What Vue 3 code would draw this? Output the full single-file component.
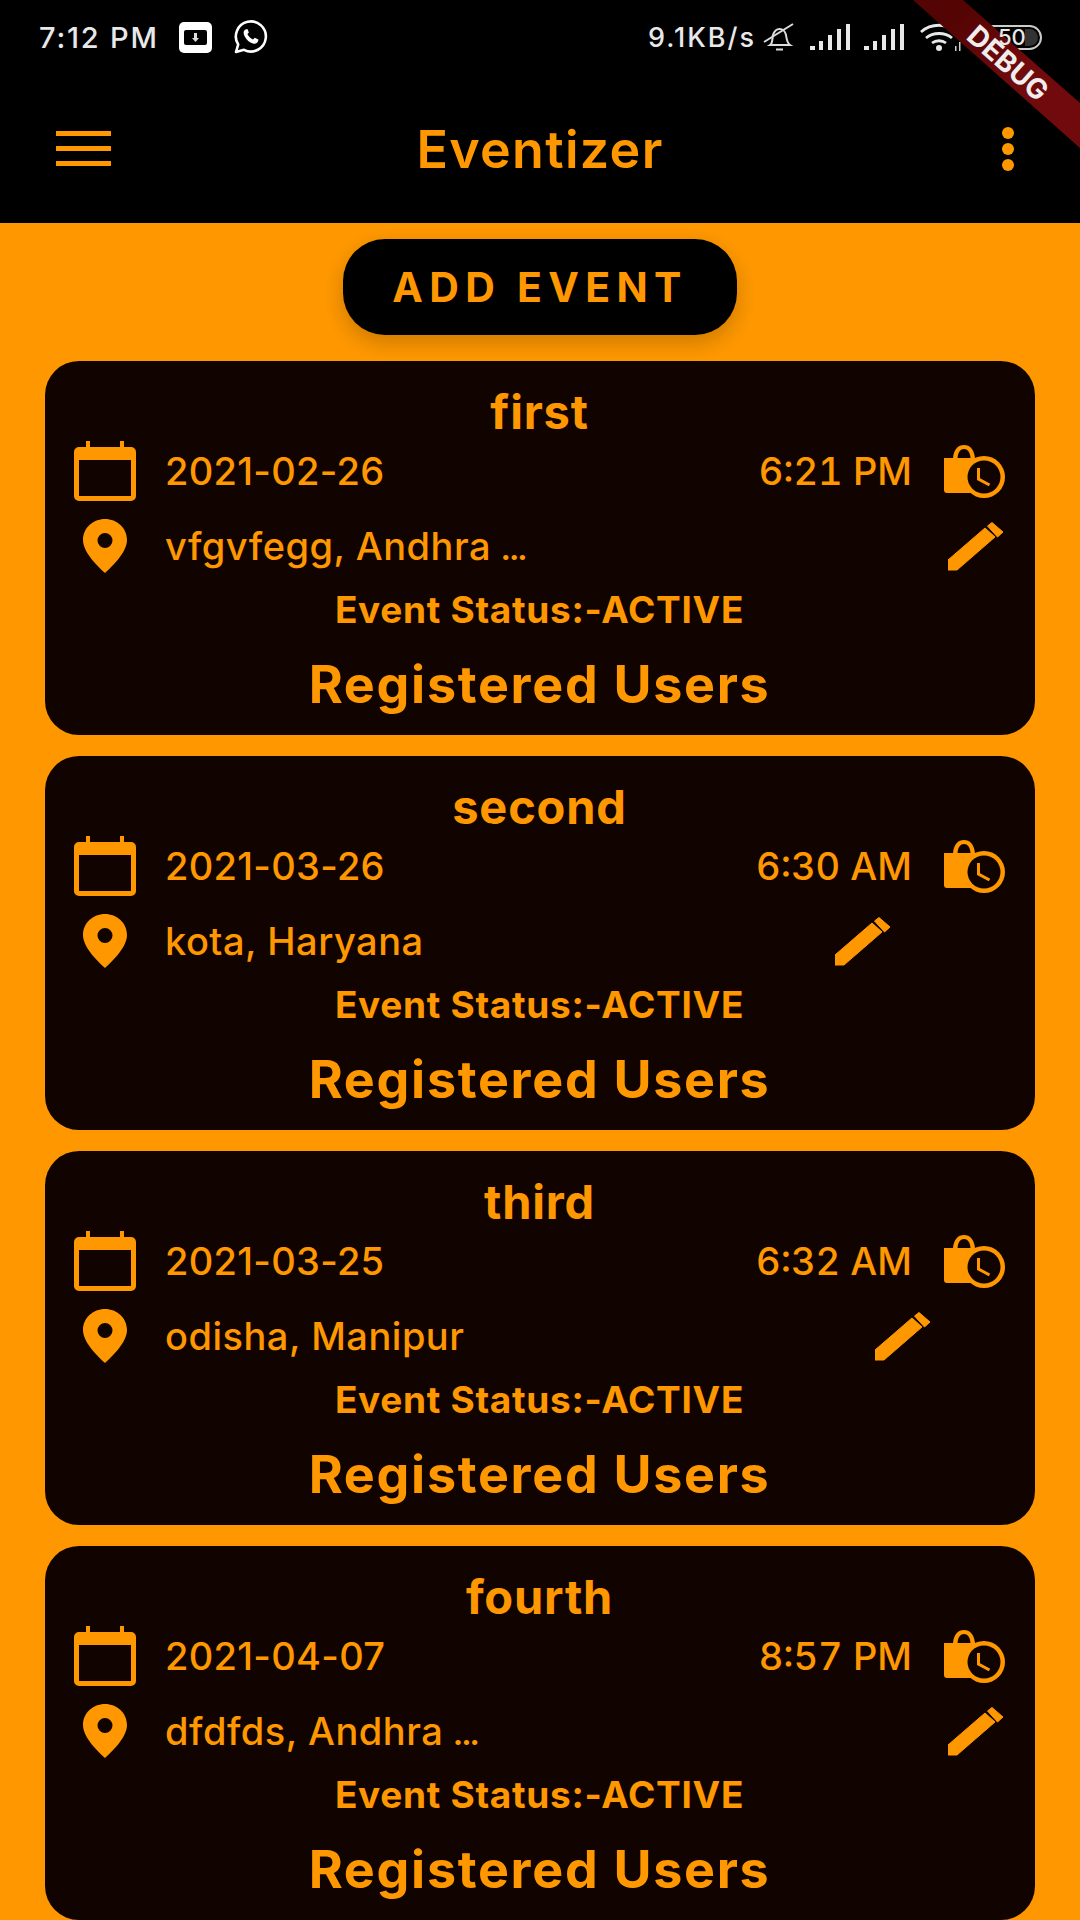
<script setup>
const events = [
  { title: 'first', date: '2021-02-26', time: '6:21 PM', place: 'vfgvfegg, Andhra', long: true },
  { title: 'second', date: '2021-03-26', time: '6:30 AM', place: 'kota, Haryana', long: false },
  { title: 'third', date: '2021-03-25', time: '6:32 AM', place: 'odisha, Manipur', long: false },
  { title: 'fourth', date: '2021-04-07', time: '8:57 PM', place: 'dfdfds, Andhra', long: true }
]
</script>

<template>
  <div class="screen">
    <header class="top">
      <div class="status">
        <span class="clock">7:12 PM</span>
        <svg class="st-box" viewBox="0 0 33 31">
          <rect width="33" height="31" rx="5" fill="#fff" />
          <rect x="5" y="8" width="23" height="15" rx="2" fill="#000" />
          <path d="M15 11h3v5h2l-3.500 4-3.500-4h2z" fill="#ddd" />
        </svg>
        <svg class="st-wa" viewBox="0 0 36 34">
          <path d="M3 32l2.200-7.500A15 15 0 1 1 11 29.800z" fill="none" stroke="#fff" stroke-width="2.600" stroke-linejoin="round" />
          <path d="M12.500 9.500c-2 1-2.500 3.500-1 6.500 2 4 5 6.500 8.500 7.500 2.500.7 4.500-.5 5.200-2.500l.2-1.500-3.700-1.800-1.700 1.900c-2.500-1-4.500-3-5.600-5.500l1.500-1.700-1.500-3.500z" fill="#fff" />
        </svg>
        <span class="speed">9.1KB/s</span>
        <svg class="st-bell" viewBox="0 0 33 28">
          <path d="M7 22c3-2 2-6 3-10 1-3 3-6 6.500-6s6 3 6.500 6c.5 4 1 8 4 10zM13 26.500h7" fill="none" stroke="#ddd" stroke-width="2" />
          <path d="M1 19L30 1" stroke="#ddd" stroke-width="2" />
        </svg>
        <svg class="st-signal" viewBox="0 0 40 26">
          <path d="M0 22h5v4H0zM9 17h4v9H9zM18 11h4v15h-4zM27 5h4v21h-4zM36 0h4v26h-4z" fill="#e8e8e8" />
        </svg>
        <svg class="st-signal" viewBox="0 0 40 26">
          <path d="M0 22h5v4H0zM9 17h4v9H9zM18 11h4v15h-4zM27 5h4v21h-4zM36 0h4v26h-4z" fill="#e8e8e8" />
        </svg>
        <svg class="st-wifi" viewBox="0 0 42 28">
          <path d="M1 9c10-9 26-9 36 0M6 15c7-6 19-6 26 0M12 20c4-3 10-3 14 0" fill="none" stroke="#e8e8e8" stroke-width="2.800" />
          <circle cx="19" cy="25" r="3" fill="#e8e8e8" />
          <path d="M35 23h1.500v5H35zM39 19h1.500v9H39z" fill="#ccc" />
        </svg>
        <div class="battery"><span>50</span><i></i></div>
      </div>
      <div class="toolbar">
        <div class="burger"><i></i><i></i><i></i></div>
        <h1>Eventizer</h1>
        <div class="dots"><i></i><i></i><i></i></div>
      </div>
    </header>

    <main class="content">
      <button class="add">ADD EVENT</button>

      <section v-for="ev in events" :key="ev.title" class="card">
        <div class="title">{{ ev.title }}</div>

        <div class="row">
          <svg class="ic-cal" viewBox="0 0 62 60">
            <path d="M12 0h4v6h30V0h4v6h7a5 5 0 0 1 5 5v44a5 5 0 0 1-5 5H5a5 5 0 0 1-5-5V11a5 5 0 0 1 5-5h7zM5 19v36h52V19z" fill="#ff9800" />
          </svg>
          <span class="txt">{{ ev.date }}</span>
          <span class="txt time">{{ ev.time }}</span>
          <svg class="ic-lock" viewBox="0 0 61 53">
            <path d="M0 13h9C10 4 14 0 20 0s10 4 11 13h9v35H3a3 3 0 0 1-3-3z" fill="#ff9800" />
            <path d="M13.500 13c.5-6 3-9 6.500-9s6 3 6.500 9z" fill="#110400" />
            <circle cx="40" cy="32" r="21" fill="#ff9800" />
            <circle cx="40" cy="32" r="16.500" fill="#110400" />
            <path d="M34.500 23v11l11 6" fill="none" stroke="#ff9800" stroke-width="3" />
          </svg>
        </div>

        <div class="row place">
          <svg class="ic-pin" viewBox="0 0 44 54">
            <path fill-rule="evenodd" d="M22 0c12 0 22 9 22 21 0 11-12 24-22 33C12 45 0 32 0 21 0 9 10 0 22 0zm0 14a7.500 7.500 0 1 0 0 15 7.500 7.500 0 0 0 0-15z" fill="#ff9800" />
          </svg>
          <span class="txt loc" :class="{ long: ev.long }">{{ ev.place }}<span v-if="ev.long" class="more"> …</span></span>
          <svg class="ic-edit" viewBox="0 0 55 49">
            <path d="M0 38L37 6l10 9L9 48H0zM39.500 4L44 .5 55 10l-5.500 5z" fill="#ff9800" stroke="#ff9800" stroke-width="1" stroke-linejoin="round" />
          </svg>
        </div>

        <div class="state">Event Status:-ACTIVE</div>
        <div class="users">Registered Users</div>
      </section>
    </main>

    <svg class="ribbon" viewBox="0 0 167 148">
      <defs>
        <linearGradient id="rib" x1="0" y1="0" x2="1" y2="1">
          <stop offset="0.2" stop-color="#550404" />
          <stop offset="0.55" stop-color="#700a0c" />
        </linearGradient>
      </defs>
      <polygon points="0,0 50,0 167,103 167,148" fill="url(#rib)" />
    </svg>
    <span class="debug">DEBUG</span>
  </div>
</template>

<style>
html, body { margin: 0; background: #ff9800; }
</style>

<style scoped>
.screen {
  position: relative;
  width: 1080px;
  height: 1920px;
  overflow: hidden;
  background: #ff9800;
  font-family: Inter, Roboto, "Liberation Sans", sans-serif;
  color: #ff9800;
}

.top {
  height: 223px;
  background: #000;
}

.status {
  height: 74px;
  display: flex;
  align-items: center;
  padding-left: 39px;
  color: #e8e8e8;
  font-weight: 500;
}
.clock { font-size: 29px; letter-spacing: 1.800px; width: 140px; white-space: nowrap; }
.st-box { width: 33px; height: 31px; }
.st-wa { width: 36px; height: 34px; margin-left: 21px; }
.speed { font-size: 27px; letter-spacing: 2px; margin-left: 379px; width: 115px; white-space: nowrap; }
.st-bell { width: 33px; height: 28px; }
.st-signal { width: 40px; height: 26px; margin-left: 14px; }
.st-wifi { width: 42px; height: 28px; margin-left: 16px; }
.battery {
  position: relative;
  width: 62px;
  height: 25px;
  margin-left: 18px;
  box-sizing: border-box;
  border: 2px solid #ccc;
  border-radius: 13px;
  font-size: 22px;
  line-height: 21px;
  padding-left: 16px;
}
.battery span { position: relative; z-index: 1; }
.battery i {
  position: absolute;
  right: 2px;
  top: 2px;
  bottom: 2px;
  width: 13px;
  border-radius: 0 9px 9px 0;
  background: #333;
}

.toolbar {
  height: 149px;
  display: flex;
  align-items: center;
  justify-content: space-between;
  padding: 0 66px 0 56px;
}
.toolbar h1 {
  margin: 2px 0 0;
  font-size: 52px;
  font-weight: 600;
  letter-spacing: 1.300px;
  position: absolute;
  left: 0;
  right: 0;
  text-align: center;
}
.burger { width: 55px; display: flex; flex-direction: column; gap: 10px; }
.burger i { height: 5px; background: #ff9800; }
.dots { display: flex; flex-direction: column; gap: 4px; }
.dots i { width: 12px; height: 12px; border-radius: 50%; background: #ff9800; }

.content {
  display: flex;
  flex-direction: column;
  align-items: center;
  padding: 16px 45px 0;
  gap: 21px;
}

.add {
  width: 394px;
  height: 96px;
  margin-bottom: 5px;
  border: 0;
  border-radius: 42px;
  background: #000;
  color: #ff9800;
  font-family: inherit;
  font-size: 41px;
  font-weight: 700;
  letter-spacing: 6.300px;
  box-shadow: 0 8px 22px rgba(0, 0, 0, 0.2);
}

.card {
  width: 990px;
  height: 374px;
  box-sizing: border-box;
  padding: 24px 30px 0 29px;
  border-radius: 34px;
  background: #110400;
  flex-shrink: 0;
}

.title {
  height: 54px;
  line-height: 54px;
  text-align: center;
  font-size: 47px;
  font-weight: 700;
  letter-spacing: 0.8px;
}

.row {
  height: 60px;
  margin-top: 2px;
  display: flex;
  align-items: center;
}
.row.place { margin-top: 15px; }

.txt {
  font-size: 38px;
  font-weight: 500;
  letter-spacing: 0.3px;
  margin-left: 29px;
  white-space: nowrap;
}
.time { margin-left: auto; font-variant-numeric: tabular-nums; letter-spacing: 0; }
.loc { letter-spacing: 0.5px; }
.loc.long { width: 372px; }
.more { font-family: Roboto, sans-serif; letter-spacing: 0; }

.ic-cal { width: 62px; height: 60px; flex-shrink: 0; }
.ic-lock { width: 61px; height: 53px; margin-left: 32px; flex-shrink: 0; }
.ic-pin { width: 44px; height: 54px; margin: 0 9px; flex-shrink: 0; }
.ic-edit { width: 55px; height: 49px; margin-left: 411px; flex-shrink: 0; }

.state {
  height: 44px;
  line-height: 44px;
  margin-top: 12px;
  text-align: center;
  font-size: 37px;
  font-weight: 700;
  letter-spacing: 0.7px;
}

.users {
  height: 60px;
  line-height: 60px;
  margin-top: 23px;
  text-align: center;
  font-size: 52px;
  font-weight: 700;
  letter-spacing: 1.700px;
}

.ribbon {
  position: absolute;
  right: 0;
  top: 0;
  width: 167px;
  height: 148px;
}
.debug {
  position: absolute;
  left: 958px;
  top: 46px;
  width: 100px;
  text-align: center;
  font-size: 28px;
  line-height: 34px;
  font-weight: 700;
  color: #eee;
  transform: rotate(41.500deg);
}
</style>
